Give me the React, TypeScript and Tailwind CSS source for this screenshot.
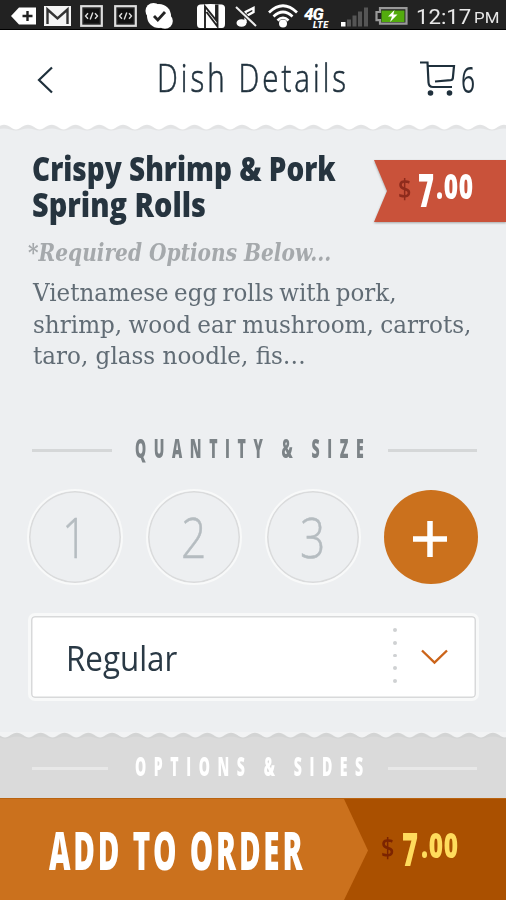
import { useLayoutEffect, useRef, useState } from 'react'
import type { ReactNode } from 'react'

const sans = "font-['Open_Sans',sans-serif]"
const serif = "font-['DejaVu_Serif',serif]"

type FitProps = {
  width: number
  className?: string
  children: ReactNode
}

// Squeezes a line of text horizontally so it fills exactly `width` pixels
function Fit({ width, className = '', children }: FitProps) {
  const ref = useRef<HTMLSpanElement>(null)
  const [scale, setScale] = useState(1)

  useLayoutEffect(() => {
    if (ref.current) setScale(width / ref.current.offsetWidth)
  }, [width])

  return (
    <span className="block shrink-0" style={{ width }}>
      <span
        ref={ref}
        className={`inline-block origin-left whitespace-nowrap align-top leading-none ${className}`}
        style={{ transform: `scaleX(${scale})` }}
      >
        {children}
      </span>
    </span>
  )
}

function CodeIcon() {
  return (
    <svg width="23" height="22" viewBox="0 0 23 22" fill="none">
      <rect x="1.2" y="1.2" width="20.6" height="19.6" stroke="#ddd" strokeWidth="2.2" />
      <rect x="4" y="4" width="15" height="14" fill="#111" />
      <path d="M8 8.2 5.5 11 8 13.8M15 8.2l2.5 2.8-2.5 2.8M12.8 7.5l-2.6 7" stroke="#ddd" strokeWidth="1.4" />
    </svg>
  )
}

function StatusBar() {
  return (
    <div className="flex h-[30px] items-start border-b border-black bg-[#222] pt-[3px]">
      <svg className="ml-[11px] mt-[4px]" width="25" height="18" viewBox="0 0 25 18">
        <path d="M0 9 8 .5h17v17H8z" fill="#fff" />
        <path d="M16.5 4v10M11.5 9h10" stroke="#222" strokeWidth="2.4" />
      </svg>
      <svg className="ml-[8px] mt-[3px]" width="27" height="20" viewBox="0 0 27 20" fill="none">
        <rect width="27" height="20" fill="#f4f4f4" />
        <path d="M3.5 18V3.5l10 9 10-9V18" stroke="#333" strokeWidth="2.4" />
      </svg>
      <div className="ml-[9px] mt-[2px]">
        <CodeIcon />
      </div>
      <div className="ml-[11px] mt-[2px]">
        <CodeIcon />
      </div>
      <svg className="ml-[8px]" width="28" height="26" viewBox="0 0 28 26" fill="none">
        <circle cx="8.5" cy="8" r="8" fill="#fff" />
        <circle cx="20" cy="18" r="7.8" fill="#fff" />
        <circle cx="14" cy="13" r="12" fill="#fff" />
        <path d="m9 13 3.8 4 7.2-8" stroke="#222" strokeWidth="2.8" />
      </svg>
      <svg className="ml-[24px]" width="28" height="26" viewBox="0 0 28 26" fill="none">
        <path d="M3 1.5Q13 .5 25 1.5 28 2 28 5v16q0 4-3 4H3q-3 0-3-4V5q0-3 3-3.5Z" fill="#fff" />
        <path d="M8 25V3.500l11 13.500V1.500M9.500 9l11 14.500V1.500" stroke="#222" strokeWidth="1.900" />
      </svg>
      <svg className="ml-[10px] mt-[2px]" width="24" height="22" viewBox="0 0 24 22" fill="none">
        <ellipse cx="6.5" cy="18" rx="5" ry="3.8" fill="#fff" />
        <path d="M10.5 18V7l8-4v4l-7 4" stroke="#fff" strokeWidth="2.4" />
        <path d="m1 2 20 19" stroke="#222" strokeWidth="4" />
        <path d="m1 2 20 19" stroke="#eee" strokeWidth="2" />
      </svg>
      <svg className="ml-[9px] mt-[1px]" width="30" height="24" viewBox="0 0 30 24" fill="none" stroke="#fff" strokeWidth="2.7">
        <path d="M1 8.5Q15-5 29 8.5M5.5 12.5q9.500-9 19 0M9.500 16.500q5.500-5.500 11 0" />
        <circle cx="15" cy="19.500" r="4" fill="#fff" stroke="none" />
      </svg>
      <div className="ml-[6px] mt-[5px] w-[29px] font-['Roboto',sans-serif] font-black italic text-white">
        <div className="text-[17px] leading-[13px] tracking-[-1px]">4G</div>
        <div className="pl-[9px] text-[9px] leading-[8px] tracking-[0.500px]">LTE</div>
      </div>
      <svg className="ml-[8px] mt-[4px]" width="28" height="20" viewBox="0 0 28 20" fill="#555">
        <rect y="15" width="4.500" height="4.500" fill="#fff" />
        <rect x="6" y="12.500" width="4" height="7" />
        <rect x="11.500" y="8.500" width="4" height="11" />
        <rect x="17" y="4.500" width="4" height="15" />
        <rect x="23" y=".5" width="4" height="19" />
      </svg>
      <svg className="ml-[6px] mt-[4px]" width="33" height="18" viewBox="0 0 33 18">
        <path d="M5 1.200h26.500v15.500H5v-3.500H1.500V5H5z" fill="#222" stroke="#999" strokeWidth="2.200" />
        <rect x="6.500" y="3.500" width="23" height="11.500" fill="#53ab0e" />
        <path d="m19.500 3-6.500 6.500h4L15 15l7.500-7.500h-4.200z" fill="#fff" />
      </svg>
      <div className="ml-[8px] mt-[4px] flex items-start font-['Roboto',sans-serif] text-[#e8e8e8]">
        <Fit width={55} className="text-[21px]">
          12:17
        </Fit>
        <div className="ml-[3px] mt-[4px]">
          <Fit width={25} className="text-[15.5px]">
            PM
          </Fit>
        </div>
      </div>
    </div>
  )
}

type WaveProps = {
  id: string
  offset: number
  fill: string
  edge: string
}

// Scalloped paper edge, one bump every 23.8px
function Wave({ id, offset, fill, edge }: WaveProps) {
  return (
    <svg className="block h-[10px] w-full" fill="none">
      <defs>
        <pattern id={id} x={offset} width="23.8" height="10" patternUnits="userSpaceOnUse">
          <path d="M0 5.500C4 5.500 7 .8 11.900 .8S19.800 5.500 23.800 5.500V10H0Z" fill={edge} />
          <path d="M0 6.500C4 6.500 7 4.500 11.900 4.500S19.800 6.500 23.800 6.500V10H0Z" fill={fill} />
        </pattern>
      </defs>
      <rect width="100%" height="10" fill={`url(#${id})`} />
    </svg>
  )
}

function Header() {
  return (
    <header className="flex h-[95px] items-start bg-white text-[#1f303c]">
      <svg className="ml-[37px] mt-[36px]" width="17" height="28" viewBox="0 0 17 28" fill="none">
        <path d="M15 1.500 2 14l13 12.500" stroke="#1f303c" strokeWidth="2.200" />
      </svg>
      <h1 className="ml-[103px] mt-[27px]">
        <Fit
          width={192}
          className={`${sans} text-[39px] font-light tracking-[4px] [-webkit-text-stroke:0.600px_#1f303c]`}
        >
          Dish Details
        </Fit>
      </h1>
      <svg className="ml-[71px] mt-[31px]" width="36" height="35" viewBox="0 0 36 35" fill="none" stroke="#1f303c" strokeWidth="2.200">
        <path d="M0 1.500h7.500l1 20q.3 4.500 4.500 4.500h19M8 5h26l-1.200 12.500q-.2 1.500-2 1.700L15 20.500" />
        <circle cx="10.500" cy="32" r="2.800" fill="#1f303c" stroke="none" />
        <circle cx="29.500" cy="32" r="2.800" fill="#1f303c" stroke="none" />
      </svg>
      <div className="ml-[5px] mt-[30px]">
        <Fit width={14} className={`${sans} text-[37px] font-medium`}>
          6
        </Fit>
      </div>
    </header>
  )
}

type PriceProps = {
  signClass: string
  className: string
}

function Price({ signClass, className }: PriceProps) {
  return (
    <div className={`flex items-start ${sans} ${className}`}>
      <div className={`mt-[9px] ${signClass}`}>
        <Fit width={13} className="text-[27px] font-semibold">
          $
        </Fit>
      </div>
      <div className="ml-[7px]">
        <Fit width={16} className="text-[46px] font-extrabold">
          7
        </Fit>
      </div>
      <div className="ml-[2px] mt-[2px]">
        <Fit width={38} className="text-[36px] font-extrabold tracking-[1px]">
          .00
        </Fit>
      </div>
    </div>
  )
}

function Dish() {
  return (
    <section className="flex h-[296px] items-start justify-between">
      <div className="w-[374px] shrink-0 pt-[17px]">
        <h2 className={`flex flex-col gap-[2px] pl-[32px] text-[#26343f] ${sans}`}>
          <Fit width={304} className="text-[34px] font-extrabold">
            Crispy Shrimp &amp; Pork
          </Fit>
          <Fit width={174} className="text-[34px] font-extrabold">
            Spring Rolls
          </Fit>
        </h2>
        <div className="pl-[28px] pt-[20px] text-[#a5a9ac]">
          <Fit width={303} className={`${serif} text-[24px] font-bold italic`}>
            *Required Options Below...
          </Fit>
        </div>
        <div className="flex flex-col gap-[7.500px] pl-[33px] pt-[16px] text-[#616c75]">
          <Fit width={364} className={`${serif} text-[24px] [word-spacing:-2px]`}>
            Vietnamese egg rolls with pork,
          </Fit>
          <Fit width={438} className={`${serif} text-[24px] [word-spacing:-1px]`}>
            shrimp, wood ear mushroom, carrots,
          </Fit>
          <Fit width={273} className={`${serif} text-[24px]`}>
            taro, glass noodle, fis…
          </Fit>
        </div>
      </div>
      <div className="mt-[26px] w-[132px] shrink-0 drop-shadow-[0_1px_1px_rgba(0,0,0,0.3)]">
        <div className="h-[62px] bg-[#c9523a] pl-[24px] pt-[6px] [clip-path:polygon(0_0,100%_0,100%_100%,0_100%,13px_50%)]">
          <Price signClass="text-[#8e2b1c]" className="text-white" />
        </div>
      </div>
    </section>
  )
}

type HeadingProps = {
  className: string
  lineClass: string
  leftClass: string
  children: ReactNode
}

function SectionHeading({ className, lineClass, leftClass, children }: HeadingProps) {
  return (
    <div className={`flex items-center pl-[32px] ${sans} ${className}`}>
      <div className={`h-[3px] ${leftClass} ${lineClass}`} />
      <Fit
        width={236}
        className="-mt-[3px] text-[26px] font-extrabold tracking-[14px]"
      >
        {children}
      </Fit>
      <div className={`ml-auto mr-[29px] h-[3px] w-[89px] ${lineClass}`} />
    </div>
  )
}

function Quantity() {
  return (
    <div className="flex justify-between px-[27px] pt-[25px]">
      {[1, 2, 3].map((n) => (
        <button
          key={n}
          className="flex h-[96px] w-[96px] justify-center rounded-full border-[2.500px] border-[#f8f9f9] pr-[2px] pt-[18px] text-[#b5bcc0] shadow-[inset_0_0_0_1.5px_#dadbdc]"
        >
          <Fit
            width={25}
            className={`${sans} text-[55px] font-light [-webkit-text-stroke:0.500px_#b5bcc0]`}
          >
            {n}
          </Fit>
        </button>
      ))}
      <button className="mr-[1px] mt-px flex h-[94px] w-[94px] items-center justify-center rounded-full bg-[#cb711d]">
        <svg className="mr-[2px] mt-[4px]" width="34" height="36" viewBox="0 0 34 36">
          <path d="M17 0v36M0 18h34" stroke="#fff" strokeWidth="5.500" />
        </svg>
      </button>
    </div>
  )
}

function SizeSelect() {
  return (
    <div className="pl-[28px] pr-[27px] pt-[28px]">
      <button className="flex h-[88px] w-full items-start rounded-[7px] border-[3px] border-[#f8f9f9] bg-white pl-[35px] text-left text-[#2a3945] shadow-[inset_0_0_0_1.5px_#d8d9da]">
        <div className="mt-[24px]">
          <Fit width={111} className={`${sans} text-[35px] font-normal`}>
            Regular
          </Fit>
        </div>
        <div className="ml-[216px] mt-[12px] flex flex-col gap-[9px]">
          {[0, 1, 2, 3, 4].map((i) => (
            <span key={i} className="h-[3.800px] w-[3.800px] rounded-full bg-[#cfd1d3]" />
          ))}
        </div>
        <svg className="ml-[24px] mt-[33px]" width="27" height="16" viewBox="0 0 27 16" fill="none">
          <path d="m1 1.500 12.500 12L26 1.500" stroke="#cb641a" strokeWidth="2.400" />
        </svg>
      </button>
    </div>
  )
}

function OrderBar() {
  return (
    <footer className="flex h-[102px] items-start border-t border-[#b96310] bg-[#aa5000]">
      <div className="h-full w-[368px] bg-[#cb711d] pl-[49px] pt-[24px] text-white [clip-path:polygon(0_0,344px_0,100%_51%,344px_100%,0_100%)]">
        <Fit width={256} className={`${sans} text-[53px] font-extrabold tracking-[5px]`}>
          ADD TO ORDER
        </Fit>
      </div>
      <div className="ml-[13px] mt-[26px]">
        <Price signClass="text-[#7c2400]" className="gap-x-[1px] text-[#ffdc5c]" />
      </div>
    </footer>
  )
}

export default function App() {
  return (
    <main className="flex h-[900px] w-[506px] flex-col overflow-hidden bg-[#edeff1]">
      <StatusBar />
      <Header />
      <div className="-mt-px h-[10px] bg-white">
        <Wave id="top-edge" offset={16} fill="#edeff1" edge="#e2e3e4" />
      </div>
      <Dish />
      <div>
        <SectionHeading
          className="h-[40px] text-[#7c8387]"
          lineClass="bg-[#d5d7d8]"
          leftClass="mr-[23px] w-[80px]"
        >
          QUANTITY &amp; SIZE
        </SectionHeading>
      </div>
      <div className="-mt-[6px]">
        <Quantity />
      </div>
      <SizeSelect />
      <div className="mt-auto">
        <div className="bg-[#f2f3f4]">
          <Wave id="options-edge" offset={5} fill="#dadada" edge="#d3d4d4" />
        </div>
        <div className="h-[56px] bg-[#dadada] pt-[3px]">
          <SectionHeading
            className="h-[46px] text-white"
            lineClass="bg-[#e8e8e8]"
            leftClass="mr-[27px] w-[76px]"
          >
            OPTIONS &amp; SIDES
          </SectionHeading>
        </div>
        <OrderBar />
      </div>
    </main>
  )
}
